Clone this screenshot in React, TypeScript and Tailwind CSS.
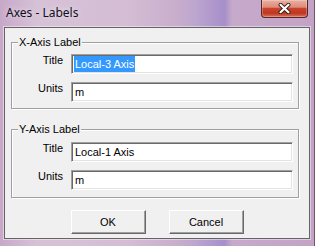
import React from 'react';

type FieldRow = { label: string; value: string; selected?: boolean };

const TextBox: React.FC<{ value: string; selected?: boolean }> = ({ value, selected }) => (
    <div className="w-[222px] h-[20px] py-[1px] pl-[2px] bg-white border border-t-[#a0a0a0] border-l-[#a0a0a0] border-b-white border-r-white shadow-[inset_1px_1px_0_#696969,inset_-1px_-1px_0_#e3e3e3] leading-[16px] whitespace-nowrap">
        <span className={selected ? 'inline-block bg-[#3399ff] text-white pl-[1px] pr-[1px]' : 'inline-block pl-[1px] text-black'}>{value}</span>
    </div>
);

const GroupBox: React.FC<{ title: string; rows: FieldRow[]; className: string; bodyClass: string }> = ({ title, rows, className, bodyClass }) => (
    <div className={`w-[288px] border border-[#a0a0a0] shadow-[1px_1px_0_#fff,inset_1px_1px_0_#fff] ${className}`}>
        <span className="block w-fit -mt-[7px] ml-[6px] px-[1px] leading-[13px] bg-[#f0f0f0] text-black">{title}</span>
        <div className={`flex flex-col gap-[8px] ${bodyClass}`}>
            {rows.map((row) => (
                <div key={row.label} className="flex items-start gap-[8px]">
                    <span className="w-[51px] text-right leading-[13px] text-black">{row.label}</span>
                    <TextBox value={row.value} selected={row.selected} />
                </div>
            ))}
        </div>
    </div>
);

const CloseButton: React.FC = () => (
    <div className="mr-[6px] w-[47px] h-[18px] rounded-b-[4px] border border-t-0 border-[#5a2626] bg-[linear-gradient(180deg,#eab0a2_0%,#df8c78_42%,#c8432c_50%,#bf3721_78%,#d8735a_100%)] shadow-[inset_0_0_0_1px_rgba(255,255,255,0.25)] flex items-center justify-center self-start">
        <svg width="13" height="11" viewBox="0 0 13 11">
            <path d="M2.5 1.8 L10.5 9.2 M10.5 1.8 L2.5 9.2" stroke="#3b1c1c" strokeWidth="4" strokeLinecap="round" />
            <path d="M2.5 1.8 L10.5 9.2 M10.5 1.8 L2.5 9.2" stroke="#ffffff" strokeWidth="2.2" strokeLinecap="round" />
        </svg>
    </div>
);

const Button: React.FC<{ label: string }> = ({ label }) => (
    <button className="w-[75px] h-[24px] bg-[#f0f0f0] border border-t-white border-l-white border-b-[#696969] border-r-[#696969] shadow-[inset_-1px_-1px_0_#a0a0a0] text-black leading-[13px]">
        {label}
    </button>
);

const App: React.FC = () => {
    return (
        <div className="w-[315px] h-[246px] overflow-hidden flex flex-col bg-[linear-gradient(90deg,#c7a8c9_0%,#d6c2d7_12%,#d4bdd5_40%,#c9aecc_56%,#bda6cf_62%,#a78fca_71.5%,#c6aacb_74%,#c3a2c6_100%)] border-r border-[#6e566e]">
            <div className="h-[27px] flex items-start justify-between">
                <span className="pl-[6px] pt-[5px] font-['Noto_Sans',sans-serif] text-[12px] leading-[16px] text-[#10101c] [text-shadow:0_0_6px_rgba(255,255,255,0.8)]">
                    Axes - Labels
                </span>
                <CloseButton />
            </div>
            <div className="ml-[4px] w-[306px] h-[212px] bg-[#f0f0f0] border border-[#646464] shadow-[0_0_0_1px_rgba(255,255,255,0.45)] pl-[6px] font-['Liberation_Sans',Arial,sans-serif] text-[11px]">
                <GroupBox
                    title="X-Axis Label"
                    className="mt-[14px]"
                    bodyClass="pt-[5px] pb-[6px]"
                    rows={[
                        { label: 'Title', value: 'Local-3 Axis', selected: true },
                        { label: 'Units', value: 'm' },
                    ]}
                />
                <GroupBox
                    title="Y-Axis Label"
                    className="mt-[20px]"
                    bodyClass="pt-[6px] pb-[7px]"
                    rows={[
                        { label: 'Title', value: 'Local-1 Axis' },
                        { label: 'Units', value: 'm' },
                    ]}
                />
                <div className="mt-[12px] -ml-[6px] flex justify-center gap-[23px]">
                    <Button label="OK" />
                    <Button label="Cancel" />
                </div>
            </div>
        </div>
    );
};

export default App;
